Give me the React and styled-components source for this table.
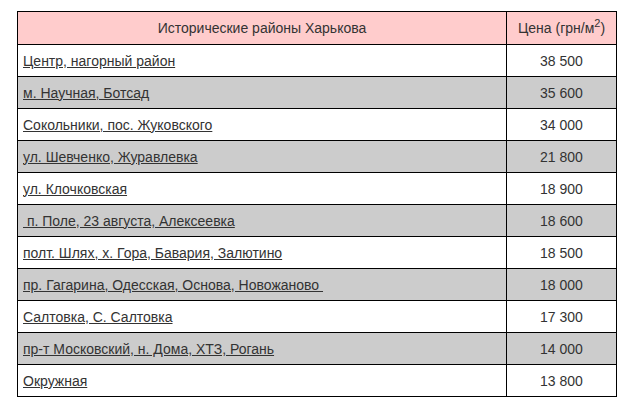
import React from "react";
import styled, { createGlobalStyle } from "styled-components";

const GlobalStyle = createGlobalStyle`
  body {
    margin: 0;
    background: #fff;
    font-family: "Liberation Sans", Arial, sans-serif;
  }
`;

const districts = [
    { name: "Центр, нагорный район", price: "38 500" },
    { name: "м. Научная, Ботсад", price: "35 600" },
    { name: "Сокольники, пос. Жуковского", price: "34 000" },
    { name: "ул. Шевченко, Журавлевка", price: "21 800" },
    { name: "ул. Клочковская", price: "18 900" },
    { name: "\u00a0п. Поле, 23 августа, Алексеевка", price: "18 600" },
    { name: "полт. Шлях, х. Гора, Бавария, Залютино", price: "18 500" },
    { name: "пр. Гагарина, Одесская, Основа, Новожаново\u00a0", price: "18 000" },
    { name: "Салтовка, С. Салтовка", price: "17 300" },
    { name: "пр-т Московский, н. Дома, ХТЗ, Рогань", price: "14 000" },
    { name: "Окружная", price: "13 800" },
];

const App = () => {
    return (
        <>
            <GlobalStyle />
            <Page>
                <Table>
                    <thead>
                        <tr>
                            <HeadCell width="478px">Исторические районы Харькова</HeadCell>
                            <HeadCell>
                                Цена (грн/м<sup>2</sup>)
                            </HeadCell>
                        </tr>
                    </thead>
                    <tbody>
                        {districts.map((d, i) => (
                            <Row key={i} gray={i % 2 === 1}>
                                <NameCell>
                                    <DistrictLink href="#">{d.name}</DistrictLink>
                                </NameCell>
                                <PriceCell>{d.price}</PriceCell>
                            </Row>
                        ))}
                    </tbody>
                </Table>
            </Page>
        </>
    );
};

export default App;

const Page = styled.div`
    padding: 11px 0 0 17px;
`;

const Table = styled.table`
    border-collapse: collapse;
    table-layout: fixed;
    width: 600px;
    font-size: 14px;
    color: #333;
`;

const HeadCell = styled.th`
    background: #ffcccc;
    border: 1px solid #000;
    font-weight: 400;
    height: 32px;
    padding: 0 5px;
    text-align: center;
    white-space: nowrap;
    width: ${({ width }) => width || "auto"};

    sup {
        font-size: 11px;
        line-height: 0;
    }
`;

const Row = styled.tr`
    background: ${({ gray }) => (gray ? "#cccccc" : "#ffffff")};
`;

const NameCell = styled.td`
    border: 1px solid #000;
    height: 31px;
    padding: 0 5px;
    text-align: left;
`;

const PriceCell = styled.td`
    border: 1px solid #000;
    height: 31px;
    padding: 0 5px;
    text-align: center;
`;

const DistrictLink = styled.a`
    color: #333;
    text-decoration: underline;
`;
